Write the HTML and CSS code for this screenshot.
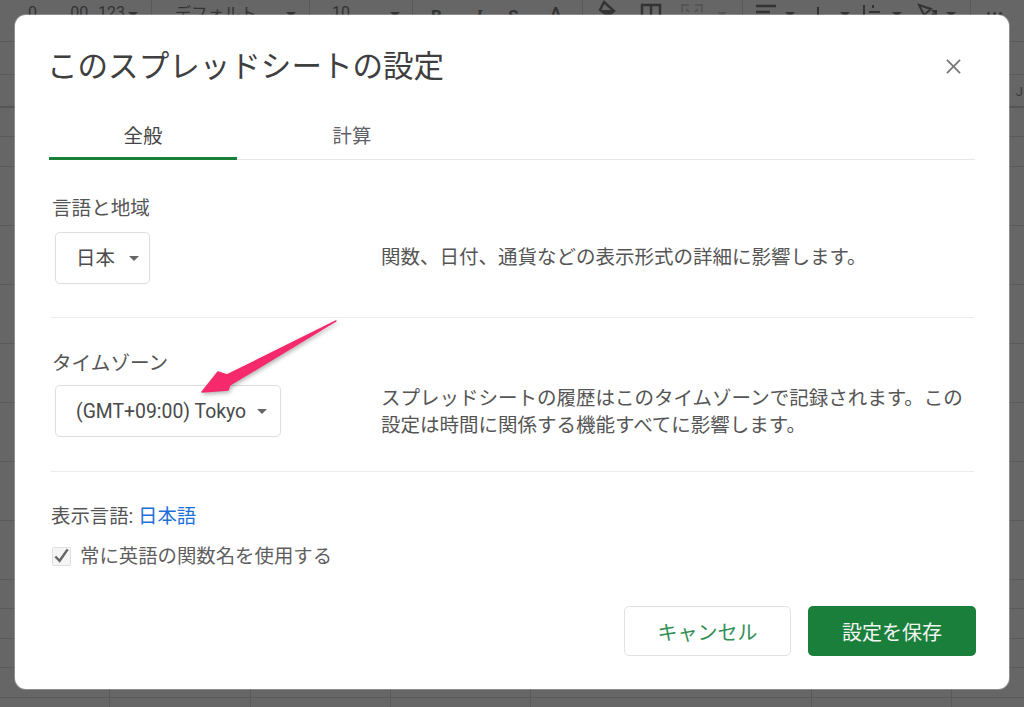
FILE: index.html
```html
<!DOCTYPE html>
<html lang="ja">
<head>
<meta charset="utf-8">
<title>このスプレッドシートの設定</title>
<link rel="stylesheet" href="styles.css">
</head>
<body>
<div class="sheet">
  <div class="toolbar">
    <span class="tb t-zero">0</span>
    <span class="tb t-dec">.00</span>
    <span class="tb t-num">123</span>
    <span class="caret c-num"></span>
    <span class="sep s1"></span>
    <span class="tb t-font">デフォルト</span>
    <span class="caret c-font"></span>
    <span class="sep s2"></span>
    <span class="tb t-size">10</span>
    <span class="caret c-size"></span>
    <span class="sep s3"></span>
    <span class="tb t-b">B</span>
    <span class="tb t-i">I</span>
    <span class="tb t-s">S</span>
    <span class="tb t-a">A</span>
    <span class="sep s4"></span>
    <svg class="ico i-fill" viewBox="0 0 24 16"><path d="M8 1l10 9-6 5-8-6z" fill="none" stroke="#333" stroke-width="2.4"/><path d="M6 9h11l-5 5z" fill="#333"/></svg>
    <svg class="ico i-border" viewBox="0 0 20 16"><path d="M1 2h18v16H1zM10 2v16M1 2h18" fill="none" stroke="#333" stroke-width="2.4"/></svg>
    <svg class="ico i-merge" viewBox="0 0 22 16"><path d="M1 9V2h7M21 9V2h-7M1 12v3M21 12v3M5 6l3 3M17 6l-3 3" fill="none" stroke="#555" stroke-width="2"/></svg>
    <span class="caret c-merge"></span>
    <span class="sep s5"></span>
    <svg class="ico i-align" viewBox="0 0 22 16"><path d="M1 3h20M1 9h14" stroke="#333" stroke-width="2.4"/></svg>
    <span class="caret c-align"></span>
    <svg class="ico i-valign" viewBox="0 0 10 16"><path d="M5 4v11" stroke="#333" stroke-width="2"/></svg>
    <span class="caret c-valign"></span>
    <svg class="ico i-wrap" viewBox="0 0 20 16"><path d="M2 4v12M11 4v3M7 11h11" fill="none" stroke="#333" stroke-width="2"/></svg>
    <span class="caret c-wrap"></span>
    <svg class="ico i-rot" viewBox="0 0 22 16"><path d="M2 2l12 4-7 6zM13 14l6-5M15 8h4v4" fill="none" stroke="#333" stroke-width="2"/></svg>
    <span class="caret c-rot"></span>
    <span class="sep s6"></span>
    <span class="dots"><i></i><i></i><i></i></span>
  </div>
  <div class="formula"></div>
  <div class="colhead"><span class="colname">J</span></div>
  <div class="grid"></div>
</div>

<div class="dialog" role="dialog">
  <header class="head">
    <h1 class="title">このスプレッドシートの設定</h1>
    <svg class="close" viewBox="0 0 16 16"><path d="M1 1l14 14M15 1L1 15" stroke="#757575" stroke-width="1.8" fill="none"/></svg>
  </header>
  <nav class="tabs">
    <span class="tab tab-general active">全般</span>
    <span class="tab tab-calc">計算</span>
  </nav>
  <section class="row row-locale">
    <div class="field">
      <div class="label">言語と地域</div>
      <div class="select sel-locale"><span class="sel-text">日本</span><span class="sel-caret"></span></div>
    </div>
    <p class="desc">関数、日付、通貨などの表示形式の詳細に影響します。</p>
  </section>
  <section class="row row-tz">
    <div class="field">
      <div class="label">タイムゾーン</div>
      <div class="select sel-tz"><span>(GMT+09:00) Tokyo</span><span class="sel-caret"></span></div>
    </div>
    <p class="desc desc-tz">スプレッドシートの履歴はこのタイムゾーンで記録されます。この設定は時間に関係する機能すべてに影響します。</p>
  </section>
  <section class="extra">
    <div class="display">表示言語: <a class="link">日本語</a></div>
    <label class="check">
      <svg class="box" viewBox="0 0 20 20"><rect x="0.5" y="0.5" width="19" height="19" rx="1" fill="#f5f5f5" stroke="#dcdcdc"/><path d="M3.5 10l4.5 4.5 8.5-12" fill="none" stroke="#666" stroke-width="2.6"/></svg>
      <span>常に英語の関数名を使用する</span>
    </label>
  </section>
  <footer class="actions">
    <button class="btn cancel">キャンセル</button>
    <button class="btn save">設定を保存</button>
  </footer>
</div>

<svg class="arrow" viewBox="195 315 150 85"><polygon points="336,321 227,375 218,372 202,392 228,390 230,385" fill="#f5296b" stroke="#f5296b" stroke-width="1.4" stroke-linejoin="round"/></svg>
</body>
</html>
```

FILE: styles.css
```css
* { box-sizing: border-box; }
html, body { margin: 0; height: 100%; }
body {
  width: 1024px;
  height: 707px;
  overflow: hidden;
  position: relative;
  background: #666;
  font-family: Roboto, "Noto Sans CJK JP", sans-serif;
  color: #444;
}

/* dimmed spreadsheet behind the dialog */
.sheet { display: flex; flex-direction: column; height: 707px; }
.toolbar {
  position: relative;
  height: 42px;
  flex: none;
  border-bottom: 1px solid #5a5a5a;
  color: #333;
}
.tb { position: absolute; top: 3px; font-size: 16px; line-height: 20px; }
.t-zero { left: 28px; }
.t-dec { left: 66px; }
.t-num { left: 98px; }
.t-font { left: 175px; font-size: 16.3px; top: 4px; }
.t-size { left: 332px; }
.t-b { left: 431px; font-weight: 700; font-size: 17px; top: 6px; }
.t-i { left: 476px; font-family: "Liberation Serif", serif; font-style: italic; font-weight: 700; font-size: 17px; top: 6px; }
.t-s { left: 508px; font-weight: 700; font-size: 17px; top: 6px; }
.t-a { left: 550px; font-weight: 700; font-size: 17px; top: 3px; }

.caret {
  position: absolute;
  top: 12px;
  border-left: 5px solid transparent;
  border-right: 5px solid transparent;
  border-top: 5px solid #333;
}
.c-num { left: 128px; }
.c-font { left: 286px; }
.c-size { left: 390px; }
.c-merge { left: 717px; border-top-color: #555; }
.c-align { left: 785px; }
.c-valign { left: 840px; }
.c-wrap { left: 892px; }
.c-rot { left: 946px; }

.sep { position: absolute; top: 0; width: 1px; height: 30px; background: #595959; }
.s1 { left: 151px; }
.s2 { left: 309px; }
.s3 { left: 412px; }
.s4 { left: 582px; }
.s5 { left: 742px; }
.s6 { left: 970px; }

.ico { position: absolute; display: block; overflow: visible; }
.i-fill { left: 596px; top: 1px; width: 24px; height: 16px; }
.i-border { left: 641px; top: 3px; width: 20px; height: 16px; }
.i-merge { left: 681px; top: 3px; width: 22px; height: 16px; }
.i-align { left: 755px; top: 3px; width: 22px; height: 16px; }
.i-valign { left: 813px; top: 3px; width: 10px; height: 16px; }
.i-wrap { left: 862px; top: 1px; width: 20px; height: 16px; }
.i-rot { left: 917px; top: 3px; width: 22px; height: 16px; }

.dots { position: absolute; left: 987px; top: 12px; display: flex; gap: 3px; }
.dots i { width: 3px; height: 3px; border-radius: 50%; background: #333; }

.formula { height: 33px; flex: none; border-bottom: 1px solid #5a5a5a; }
.colhead {
  height: 33px;
  flex: none;
  border-bottom: 2px solid #555;
  display: flex;
  justify-content: flex-end;
  align-items: center;
  padding: 3px 1px 0 0;
}
.colname { font-size: 13px; line-height: 16px; color: #3a3a3a; }
.grid {
  flex: 1;
  background-image:
    repeating-linear-gradient(to bottom, transparent 0, transparent 28.5px, #5a5a5a 28.5px, #5a5a5a 29.5px),
    repeating-linear-gradient(to right, transparent 0, transparent 139.3px, #5a5a5a 139.3px, #5a5a5a 140.3px);
  background-position: 0 0, -30px 0;
}

/* dialog */
.dialog {
  position: absolute;
  left: 15px;
  top: 15px;
  width: 994px;
  height: 674px;
  background: #fff;
  border-radius: 11px;
  padding: 0 34px;
  display: flex;
  flex-direction: column;
  box-shadow: 0 0 0 1px rgba(255, 255, 255, 0.25);
}
.head { display: flex; justify-content: space-between; align-items: center; height: 102px; flex: none; }
.title { margin: 2px 0 0 -2px; font-size: 30.55px; font-weight: 400; line-height: 40px; color: #3f3f3f; }
.close { width: 15px; height: 15px; margin-right: 14px; display: block; flex: none; margin-top: 1px; }

.tabs { display: flex; height: 43px; flex: none; border-bottom: 1px solid #e8e8e8; }
.tab { text-align: center; font-size: 19.4px; line-height: 40px; color: #5f6368; height: 43px; margin-bottom: -1px; }
.tab-general { width: 188px; }
.tab-calc { width: 230px; }
.tab.active { color: #444; border-bottom: 3px solid #188038; }

.row { display: flex; align-items: flex-start; flex: none; margin: 0 1px 0 2px; border-bottom: 1px solid #ececec; }
.row-locale { height: 158px; padding-top: 33px; }
.row-tz { height: 154px; padding-top: 31px; }
.field { width: 330px; flex: none; }
.label { font-size: 19.6px; line-height: 29px; color: #555; padding-left: 1px; }
.row-locale .label { padding-top: 1px; }
.select {
  margin-left: 4px;
  height: 52px;
  display: inline-flex;
  align-items: center;
  border: 1px solid #dedede;
  border-radius: 5px;
  padding-left: 20px;
  font-size: 19.4px;
  color: #4a4a4a;
  box-shadow: 0 0 1px #e8e8e8;
}
.sel-text { padding-bottom: 4px; }
.sel-locale { width: 95px; margin-top: 9px; }
.sel-locale .sel-caret { margin-left: 14px; }
.sel-tz { width: 226px; margin-top: 7px; }
.sel-caret {
  margin-left: 11px;
  border-left: 5px solid transparent;
  border-right: 5px solid transparent;
  border-top: 5px solid #666;
}
.desc { margin: 0; font-size: 19.5px; line-height: 27px; color: #555; flex: 1; }
.row-locale .desc { padding-top: 51px; }
.desc-tz { padding-top: 36px; }

.extra { flex: none; padding-top: 30px; margin-left: 2px; }
.display { font-size: 19.4px; line-height: 29px; color: #555; }
.link { color: #1f6fd8; }
.check { display: flex; align-items: center; margin-top: 11px; font-size: 19.4px; line-height: 29px; color: #5f5f5f; gap: 9px; }
.box { width: 19px; height: 19px; display: block; flex: none; margin-left: 1px; }

.actions { flex: none; display: flex; justify-content: flex-end; gap: 17px; margin-top: 35px; margin-right: -1px; }
.btn {
  width: 168px;
  height: 50px;
  border-radius: 5px;
  font: inherit;
  font-size: 20px;
  padding: 0;
}
.cancel { width: 167px; background: #fff; border: 1px solid #e2e2e2; color: #2f8f55; }
.save { background: #1b7f3c; border: 0; color: #f0f5f1; }

.arrow {
  position: absolute;
  left: 195px;
  top: 315px;
  width: 150px;
  height: 85px;
  overflow: visible;
  filter: drop-shadow(1px 2px 2px rgba(0,0,0,0.3));
}
```
